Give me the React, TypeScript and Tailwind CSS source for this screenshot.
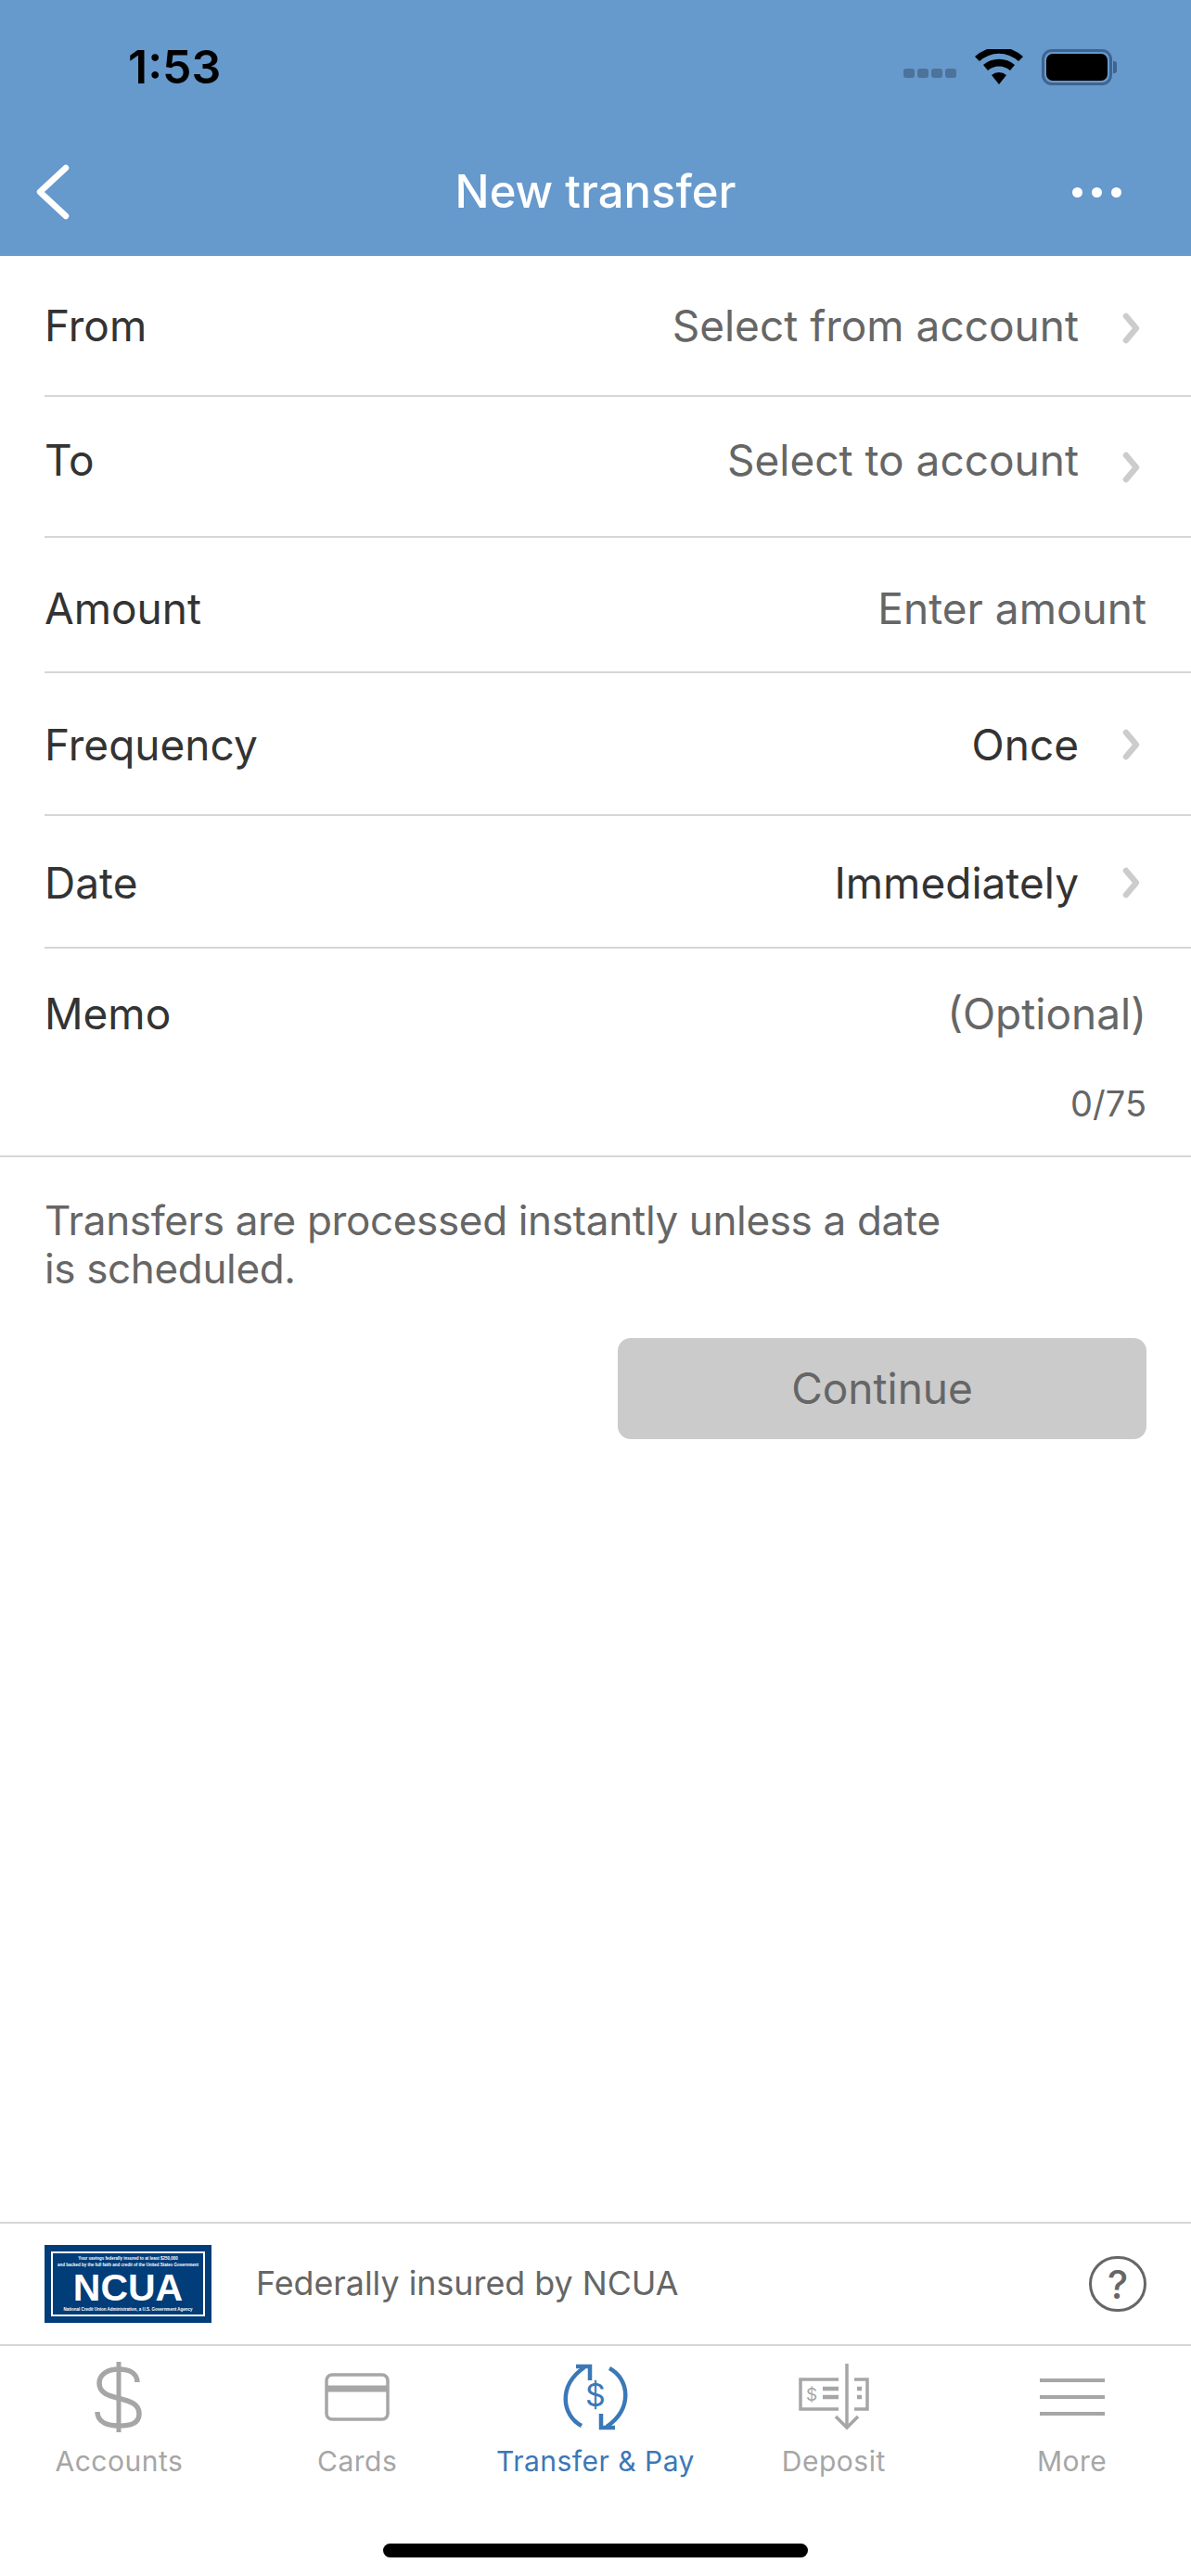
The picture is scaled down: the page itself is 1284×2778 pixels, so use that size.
const font = { fontFamily: "Inter, 'Noto Sans', sans-serif" };

function Chevron({ className = "" }: { className?: string }) {
  return (
    <svg width="22" height="36" viewBox="0 0 22 36" className={className}>
      <path d="M6 5l11 13L6 31" fill="none" stroke="#cccccc" strokeWidth="6.5" strokeLinecap="round" strokeLinejoin="round" />
    </svg>
  );
}

function Row({ label, value, dark, chevron = true, className = "", chevronClass = "" }: { label: string; value: string; dark?: boolean; chevron?: boolean; className?: string; chevronClass?: string }) {
  return (
    <div className={"ml-[48px] flex items-center justify-between border-b-2 border-[#d6d6d6] " + (chevron ? "pr-[54px] " : "pr-[48px] ") + className}>
      <span className="text-[46px] leading-[60px] text-[#333333]">{label}</span>
      <div className="flex items-center">
        <span className={"text-[46px] leading-[60px] " + (dark ? "text-[#333333]" : "text-[#666666]")}>{value}</span>
        {chevron && <Chevron className={"ml-[45px] " + chevronClass} />}
      </div>
    </div>
  );
}

function NcuaLogo() {
  return (
    <div className="flex h-[84px] w-[180px] items-center justify-center bg-[#003d79] p-[7px]">
      <div className="flex h-full w-full flex-col items-center justify-between border-2 border-white py-[2px] text-white" style={{ fontFamily: "'Liberation Sans', sans-serif" }}>
        <div className="text-center text-[4.5px] font-bold leading-[7px] whitespace-nowrap">
          <div>Your savings federally insured to at least $250,000</div>
          <div>and backed by the full faith and credit of the United States Government</div>
        </div>
        <div className="text-[41px] font-bold leading-[36px]">NCUA</div>
        <div className="text-[4.5px] font-bold leading-[7px] whitespace-nowrap">National Credit Union Administration, a U.S. Government Agency</div>
      </div>
    </div>
  );
}

function DollarIcon() {
  return (
    <svg width="52" height="76" viewBox="0 0 52 76" fill="none" stroke="#a6a6a6">
      <path d="M26 0v76" strokeWidth="5" />
      <path d="M46 22c0-10-9-14-20-14S5 13 5 23c0 22 43 11 43 33 0 11-10 13-22 13S3 65 3 54" strokeWidth="5.5" />
    </svg>
  );
}

function CardIcon() {
  return (
    <svg width="70" height="52" viewBox="0 0 70 52" fill="none" stroke="#a6a6a6">
      <rect x="2" y="2" width="66" height="48" rx="6" strokeWidth="3.5" />
      <path d="M2 17h66" strokeWidth="7" />
    </svg>
  );
}

function TransferIcon() {
  return (
    <svg width="76" height="74" viewBox="0 0 76 74" fill="none" stroke="#3b78b8" strokeWidth="4.5">
      <path d="M23 68C2 57-3 25 26 5" />
      <path d="M17 4h15v15" />
      <path d="M53 6c21 11 26 43-3 63" />
      <path d="M59 70H44V55" />
      <text x="38" y="47" textAnchor="middle" fontSize="34" fill="#3b78b8" stroke="none" fontFamily="Inter, sans-serif">$</text>
    </svg>
  );
}

function DepositIcon() {
  return (
    <svg width="76" height="72" viewBox="0 0 76 72" fill="none" stroke="#a6a6a6">
      <path d="M43 17H2v32h41" strokeWidth="3.5" />
      <path d="M60 17h14v32H60" strokeWidth="3.5" />
      <path d="M26 27h17M26 36h17" strokeWidth="4.5" />
      <path d="M63 27h5M63 36h5" strokeWidth="4.5" />
      <path d="M52 0v69" strokeWidth="3.5" />
      <path d="M40 57l12 12 12-12" strokeWidth="3.5" />
      <text x="14" y="40" textAnchor="middle" fontSize="19" fill="#a6a6a6" stroke="none" fontFamily="Inter, sans-serif">$</text>
    </svg>
  );
}

function MoreIcon() {
  return (
    <svg width="70" height="44" viewBox="0 0 70 44" fill="none" stroke="#a6a6a6" strokeWidth="4">
      <path d="M0 4h70M0 22h70M0 40h70" />
    </svg>
  );
}

const tabs = [
  { label: "Accounts", icon: <DollarIcon /> },
  { label: "Cards", icon: <CardIcon /> },
  { label: "Transfer & Pay", icon: <TransferIcon />, active: true },
  { label: "Deposit", icon: <DepositIcon /> },
  { label: "More", icon: <MoreIcon /> },
];

export default function App() {
  return (
    <div className="flex h-[2778px] w-[1284px] flex-col overflow-hidden bg-white" style={font}>
      {/* Barra azul */}
      <header className="h-[276px] shrink-0 bg-[#6699cc] text-white">
        <div className="flex h-[144px] items-center justify-between pl-[138px] pr-[80px]">
          <span className="text-[50px] font-semibold leading-[60px] text-black">1:53</span>
          <div className="flex items-center">
            <div className="mt-[14px] mr-[20px] flex gap-[3px]">
              <span className="h-[10px] w-[12px] rounded-[3px] bg-[#4d739a]" />
              <span className="h-[10px] w-[12px] rounded-[3px] bg-[#4d739a]" />
              <span className="h-[10px] w-[12px] rounded-[3px] bg-[#4d739a]" />
              <span className="h-[10px] w-[12px] rounded-[3px] bg-[#4d739a]" />
            </div>
            <svg width="52" height="38" viewBox="0 0 52 38" className="mr-[20px]">
              <path d="M26 38L18 28a12 12 0 0 1 16 0z" />
              <path d="M14 23l-5-6a26 26 0 0 1 34 0l-5 6a18 18 0 0 0-24 0z" />
              <path d="M5 13L0 8a38 38 0 0 1 52 0l-5 5a31 31 0 0 0-42 0z" />
            </svg>
            <div className="flex items-center">
              <div className="h-[39px] w-[76px] rounded-[11px] border-[3px] border-[#3f6490] p-[2px]">
                <div className="h-full w-full rounded-[7px] bg-black" />
              </div>
              <div className="ml-[1px] h-[13px] w-[4px] rounded-r-[3px] bg-[#3f6490]" />
            </div>
          </div>
        </div>
        <div className="flex h-[126px] items-center px-[38px]">
          <div className="flex-1">
            <svg width="38" height="60" viewBox="0 0 38 60" fill="none" stroke="white" strokeWidth="6.5" strokeLinecap="round" strokeLinejoin="round">
              <path d="M33 4L5 30l28 26" />
            </svg>
          </div>
          <span className="text-[49px] font-medium leading-[60px]">New transfer</span>
          <div className="flex flex-1 justify-end">
            <div className="mr-[37px] flex gap-[10px]">
              <span className="h-[11px] w-[11px] rounded-full bg-white" />
              <span className="h-[11px] w-[11px] rounded-full bg-white" />
              <span className="h-[11px] w-[11px] rounded-full bg-white" />
            </div>
          </div>
        </div>
      </header>

      {/* Formulario */}
      <main className="flex-1">
        <Row label="From" value="Select from account" className="h-[152px]" chevronClass="mt-[6px]" />
        <Row label="To" value="Select to account" className="h-[152px] pb-[14px]" chevronClass="mt-[16px]" />
        <Row label="Amount" value="Enter amount" chevron={false} className="h-[146px] pt-[8px]" />
        <Row label="Frequency" value="Once" dark className="h-[154px] pt-[2px]" />
        <Row label="Date" value="Immediately" dark className="h-[143px] pt-[2px]" />

        <div className="h-[225px] border-b-2 border-[#d6d6d6] pl-[48px] pr-[48px] pt-[40px]">
          <div className="flex items-center justify-between">
            <span className="text-[46px] leading-[60px] text-[#333333]">Memo</span>
            <span className="text-[46px] leading-[60px] text-[#666666]">(Optional)</span>
          </div>
          <div className="mt-[44px] text-right text-[38px] leading-[46px] text-[#666666]">0/75</div>
        </div>

        <div className="px-[48px] pt-[42px]">
          <p className="w-[1000px] text-[44px] leading-[52px] tracking-[-0.35px] text-[#666666]">
            Transfers are processed instantly unless a date is scheduled.
          </p>
          <div className="mt-[49px] flex justify-end">
            <button className="h-[109px] w-[570px] rounded-[14px] bg-[#cbcbcb] text-[46px] text-[#666666]">Continue</button>
          </div>
        </div>
      </main>

      {/* Aviso NCUA */}
      <div className="flex h-[132px] shrink-0 items-center border-t-2 border-[#d6d6d6] pl-[48px] pr-[48px]">
        <NcuaLogo />
        <span className="ml-[48px] text-[35.8px] text-[#666666]">Federally insured by NCUA</span>
        <div className="ml-auto flex h-[60px] w-[62px] items-center justify-center rounded-full border-[3px] border-[#666666] text-[42px] font-medium text-[#666666]">?</div>
      </div>

      {/* Tabs */}
      <nav className="h-[250px] shrink-0 border-t-2 border-[#d6d6d6]">
        <div className="grid grid-cols-5">
          {tabs.map((t) => (
            <div key={t.label} className="flex flex-col items-center">
              <div className="flex h-[104px] items-center justify-center pt-[6px]">{t.icon}</div>
              <span className={"mt-0 text-[30px] leading-[40px] tracking-[0.5px] " + (t.active ? "text-[#3b78b8]" : "text-[#a6a6a6]")}>{t.label}</span>
            </div>
          ))}
        </div>
        <div className="mx-auto mt-[69px] h-[15px] w-[458px] rounded-full bg-black" />
      </nav>
    </div>
  );
}
